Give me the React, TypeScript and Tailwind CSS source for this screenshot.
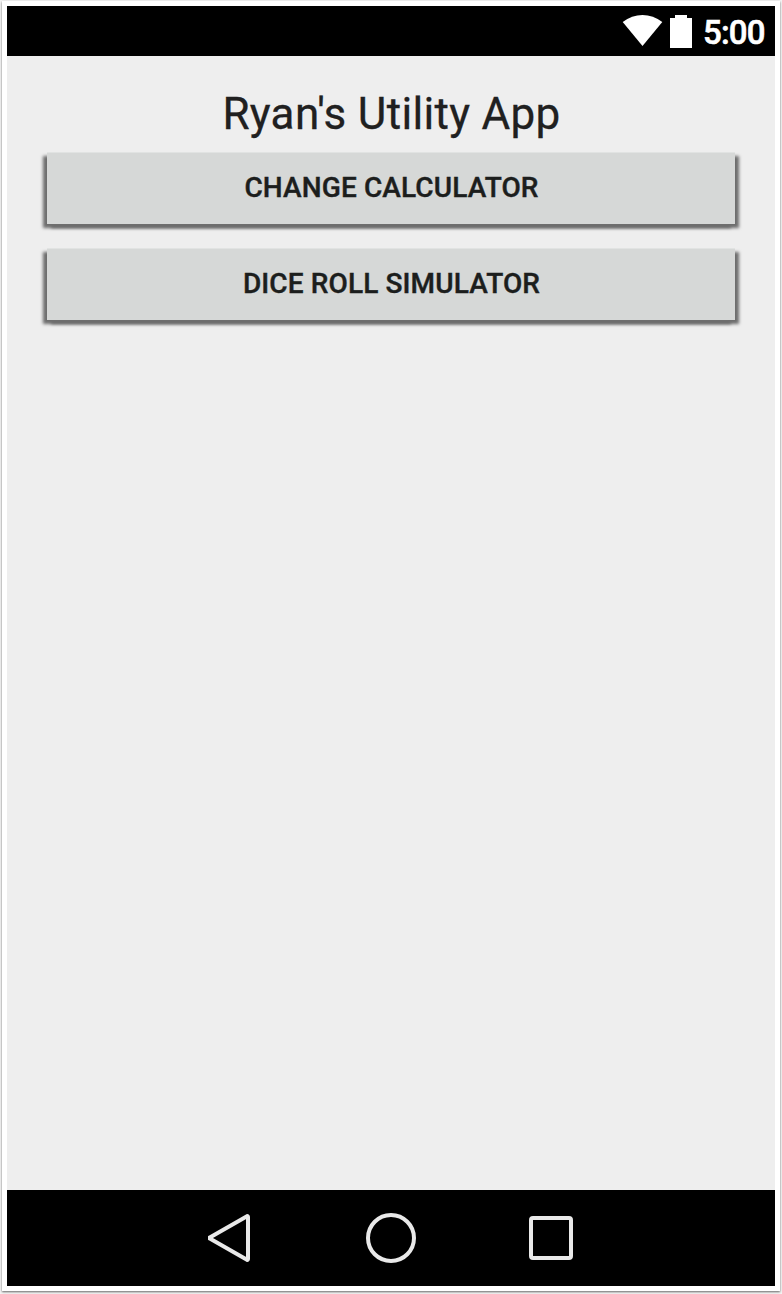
import React from 'react';

function StatusBar() {
  return (
    <header className="flex h-[50px] shrink-0 items-start bg-black pl-[615px] text-white">
      <svg className="mt-[8px] mr-[7px] h-8 w-[41px] shrink-0" viewBox="0 0 41 32" fill="currentColor" aria-label="Wi-Fi">
        <path d="M0.7 8 C12.5 -1.3 28.5 -1.3 40.3 8 L20.5 32 Z" />
      </svg>
      <svg className="mt-[9px] mr-[11px] h-[33px] w-[22px] shrink-0" viewBox="0 0 22 33" fill="currentColor" aria-label="Battery">
        <path d="M5 0H17V3H22V33H0V3H5Z" />
      </svg>
      <time className="mt-[8px] text-[33px] leading-[38px] font-medium tracking-[-0.8px] whitespace-nowrap [-webkit-text-stroke:0.6px_white]">5:00</time>
    </header>
  );
}

function MenuButton({ children }: { children: React.ReactNode }) {
  return (
    <button
      type="button"
      className="flex h-[72px] w-full items-center justify-center border-t border-[#e1e3e2] bg-[#d6d8d7] pb-[2px] pl-[1px] text-[28px] leading-[33px] font-medium tracking-[0.12px] text-[#1c1e1d] uppercase shadow-[-4px_4px_3px_0_#6e6e6e,4px_4px_3px_0_#6e6e6e] [-webkit-text-stroke:0.4px_#1c1e1d]"
    >
      {children}
    </button>
  );
}

function NavigationBar() {
  return (
    <nav className="flex h-24 shrink-0 items-center bg-black pl-[201px] text-[#e9e9e9]">
      <svg className="mr-[110px] size-12" viewBox="0 0 48 48" fill="none" stroke="currentColor" strokeWidth="4" strokeLinejoin="round">
        <path d="M1.8 23.4 L39 2.2 Q40 1.8 40 3 V45 Q40 46.2 39 45.8 L1.8 24.6 Q1 24 1.8 23.4 Z" />
      </svg>
      <svg className="mr-[113px] size-[50px]" viewBox="0 0 50 50" fill="none" stroke="currentColor" strokeWidth="4">
        <circle cx="25" cy="25" r="23" />
      </svg>
      <svg className="size-11" viewBox="0 0 44 44" fill="none" stroke="currentColor" strokeWidth="4">
        <rect x="2" y="2" width="40" height="40" rx="2" />
      </svg>
    </nav>
  );
}

export default function App() {
  return (
    <div className="h-[1294px] w-[782px] overflow-hidden bg-[#f4f4f4] px-[2px] pt-[1px] pb-[3px] font-['Roboto',sans-serif]">
      <div className="flex h-full flex-col bg-white p-[5px] shadow-[0_1px_2px_#666]">
        <StatusBar />
        <main className="flex flex-1 flex-col bg-[#eee] px-10 pt-8">
          <h1 className="pl-[1px] text-center text-[44px] leading-[52px] font-normal tracking-[0.32px] whitespace-nowrap text-[#202020] [-webkit-text-stroke:0.3px_#202020]">
            Ryan's Utility App
          </h1>
          <div className="mt-[12px] flex flex-col gap-[24px]">
            <MenuButton>Change Calculator</MenuButton>
            <MenuButton>Dice Roll Simulator</MenuButton>
          </div>
        </main>
        <NavigationBar />
      </div>
    </div>
  );
}
